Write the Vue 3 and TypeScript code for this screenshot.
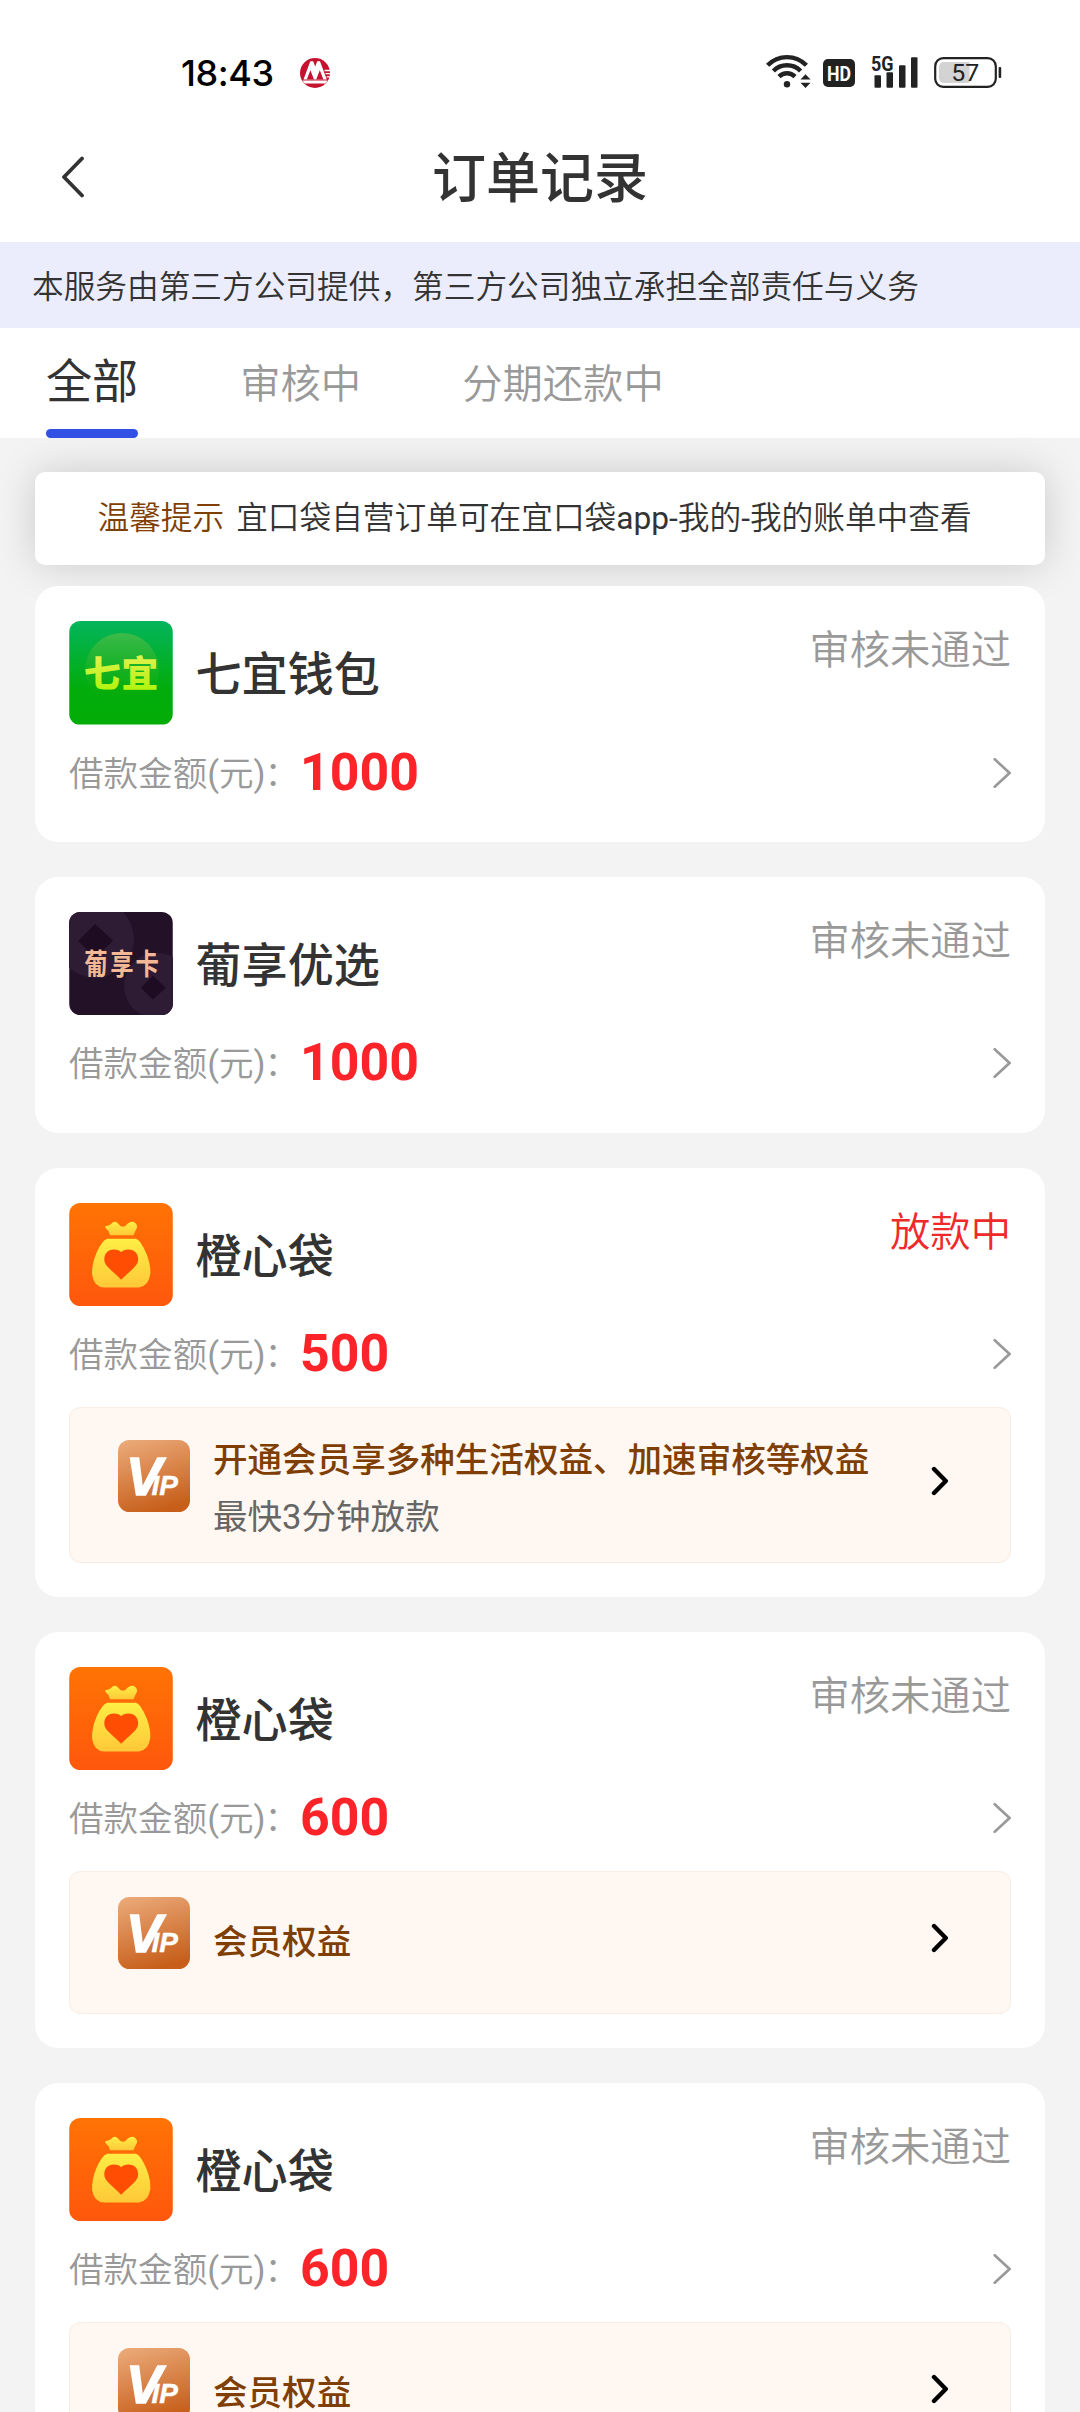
<script setup lang="ts">
type Logo = 'qiyi' | 'puxiang' | 'orange'

interface Benefit {
  title: string
  subtitle?: string
}

interface Order {
  id: number
  name: string
  logo: Logo
  status: string
  active?: boolean
  amount: number
  benefit?: Benefit
}

const tabs: string[] = ['全部', '审核中', '分期还款中']

const orders: Order[] = [
  { id: 1, name: '七宜钱包', logo: 'qiyi', status: '审核未通过', amount: 1000 },
  { id: 2, name: '葡享优选', logo: 'puxiang', status: '审核未通过', amount: 1000 },
  {
    id: 3,
    name: '橙心袋',
    logo: 'orange',
    status: '放款中',
    active: true,
    amount: 500,
    benefit: { title: '开通会员享多种生活权益、加速审核等权益', subtitle: '最快3分钟放款' },
  },
  { id: 4, name: '橙心袋', logo: 'orange', status: '审核未通过', amount: 600, benefit: { title: '会员权益' } },
  { id: 5, name: '橙心袋', logo: 'orange', status: '审核未通过', amount: 600, benefit: { title: '会员权益' } },
]
</script>

<template>
  <div class="page">
    <div class="statusbar">
      <span class="clock">18:43</span>
      <svg class="bank" width="30" height="30" viewBox="0 0 30 30">
        <circle cx="15" cy="15" r="15" fill="#c4122f" />
        <path d="M3.5 21.6 L10.3 3.3 H13.2 L15.2 8.4 L17.2 3.3 H20 L26.8 21.6 Z" fill="#fff" />
        <path d="M6.8 21.6 L10.4 12.2 L14 21.6 Z M16.2 21.6 L19.8 12.2 L23.4 21.6 Z" fill="#c4122f" />
        <path d="M24.5 12.5 H30 M25.5 15.7 H30 M26.6 18.9 H30" stroke="#fff" stroke-width="1.3" />
        <path d="M2.5 22.6 H27.5 L25.2 25.6 H4.8 Z" fill="#fff" />
      </svg>
      <div class="signals">
        <svg class="wifi" width="46" height="34" viewBox="0 0 46 34">
          <g fill="none" stroke="#222" stroke-width="4.4">
            <path d="M1.6 11.3 A27 27 0 0 1 40.4 11.3" />
            <path d="M7.4 17 A19 19 0 0 1 34.6 17" />
            <path d="M13 22.6 A11.4 11.4 0 0 1 29 22.6" />
          </g>
          <circle cx="21" cy="30.3" r="3.2" fill="#222" />
          <path d="M34.5 25.6 L39.5 20.3 L44.5 25.6 Z M34.5 28.8 L39.5 34 L44.5 28.8 Z" fill="#222" />
        </svg>
        <svg class="hd" width="32" height="28" viewBox="0 0 32 28">
          <rect width="32" height="28" rx="5" fill="#222" />
          <text x="4" y="21.6" textLength="24" lengthAdjust="spacingAndGlyphs" class="hd-text">HD</text>
        </svg>
        <svg class="cell" width="48" height="34" viewBox="0 0 48 34">
          <text x="1" y="16.5" textLength="22.5" lengthAdjust="spacingAndGlyphs" class="g-text">5G</text>
          <g fill="#222">
            <rect x="4.5" y="21.3" width="6.5" height="12.4" rx="1" />
            <rect x="16.5" y="18.3" width="6.5" height="15.4" rx="1" />
            <rect x="29" y="11.3" width="6.5" height="22.4" rx="1" />
            <rect x="41" y="3.3" width="6.5" height="30.4" rx="1" />
          </g>
        </svg>
        <svg class="battery" width="68" height="31" viewBox="0 0 68 31">
          <rect x="1.2" y="1.2" width="60.6" height="28.6" rx="8" fill="#fff" stroke="#222" stroke-width="2.2" />
          <path d="M10 5 H35.5 V26 H10 A5 5 0 0 1 5 21 V10 A5 5 0 0 1 10 5 Z" fill="#d3d3d3" />
          <rect x="64.6" y="10" width="2.6" height="11" rx="1" fill="#222" />
          <text x="17.3" y="24" textLength="28" lengthAdjust="spacingAndGlyphs" class="b-text">57</text>
        </svg>
      </div>
    </div>

    <header class="navbar">
      <svg class="back" width="24" height="42" viewBox="0 0 24 42">
        <path d="M22 2.5 L4 21 L22 39.5" fill="none" stroke="#333" stroke-width="3.8" stroke-linecap="round" stroke-linejoin="round" />
      </svg>
      <h1 class="title">订单记录</h1>
      <span class="nav-side"></span>
    </header>

    <div class="notice">本服务由第三方公司提供，第三方公司独立承担全部责任与义务</div>

    <nav class="tabs">
      <span v-for="(tab, i) in tabs" :key="tab" class="tab" :class="{ current: i === 0 }">{{ tab }}</span>
    </nav>

    <main class="body">
      <div class="tip">
        <span class="tip-label">温馨提示</span><span>宜口袋自营订单可在宜口袋<span class="latin">app-</span>我的<span class="latin">-</span>我的账单中查看</span>
      </div>

      <section v-for="order in orders" :key="order.id" class="card" :class="{ extended: order.benefit }">
        <div class="head">
          <svg class="logo" width="104" height="104" viewBox="0 0 104 104">
            <template v-if="order.logo === 'qiyi'">
              <defs>
                <linearGradient id="qy-bg" x1="0" y1="0" x2="0" y2="1">
                  <stop offset="0" stop-color="#04b55c" />
                  <stop offset="0.65" stop-color="#02ac0c" />
                  <stop offset="1" stop-color="#03ac05" />
                </linearGradient>
                <linearGradient id="qy-orb" x1="0" y1="0" x2="0" y2="1">
                  <stop offset="0" stop-color="#3dbb4a" />
                  <stop offset="0.75" stop-color="#0fae10" stop-opacity="0.5" />
                  <stop offset="1" stop-color="#03ac05" stop-opacity="0" />
                </linearGradient>
                <linearGradient id="qy-text" x1="0" y1="0" x2="0" y2="1">
                  <stop offset="0" stop-color="#f0f060" />
                  <stop offset="1" stop-color="#a6f500" />
                </linearGradient>
              </defs>
              <rect width="104" height="104" fill="url(#qy-bg)" />
              <circle cx="53" cy="49" r="37" fill="url(#qy-orb)" />
              <text x="14.5 52.5" y="66.5" class="qy-text" fill="url(#qy-text)">七宜</text>
            </template>
            <template v-else-if="order.logo === 'puxiang'">
              <rect width="104" height="104" fill="#231128" />
              <circle cx="26" cy="27" r="39" fill="#2e1c34" />
              <circle cx="88" cy="74" r="33" fill="#2e1c34" />
              <path d="M26 12 L44 29 L26 46 L9 29 Z" fill="#1d0c22" />
              <path d="M84 64 L97 76 L84 88 L72 76 Z" fill="#1d0c22" />
              <text transform="translate(15 63) scale(1 1.24)" x="0 26.2 51.5" y="0" class="px-text">葡享卡</text>
            </template>
            <template v-else>
              <defs>
                <linearGradient id="or-bg" x1="0" y1="0" x2="0" y2="1">
                  <stop offset="0" stop-color="#ff7304" />
                  <stop offset="1" stop-color="#ff570c" />
                </linearGradient>
                <linearGradient id="or-bag" x1="0" y1="0" x2="0" y2="1">
                  <stop offset="0" stop-color="#ffee45" />
                  <stop offset="1" stop-color="#ffc838" />
                </linearGradient>
              </defs>
              <rect width="104" height="104" fill="url(#or-bg)" />
              <path
                d="M41 32.5 L39.5 28.5 Q36 25 36 23.3 Q41 22.5 43 20 Q46.5 17.5 49.5 21 Q53 26 57 22.5 Q60.5 18 65 19 Q70.5 22 66.5 28 L64.5 32.5 Z"
                fill="url(#or-bag)"
              />
              <path
                d="M38 36 H67 Q72 37.5 78 52 Q82 63 81.5 71 Q80 83 70 85 H35 Q24.5 84 23 72 Q22.5 62 27 51 Q32.5 38 38 36 Z"
                fill="url(#or-bag)"
              />
              <path
                d="M52.2 49.5 C56 45 69.5 45 69.2 57 C69 63 63 66.5 52.2 77 C41.5 66.5 35.4 63 35.2 57 C35 45 48.5 45 52.2 49.5 Z"
                fill="#ff4d04"
              />
            </template>
          </svg>
          <span class="name">{{ order.name }}</span>
          <span class="status" :class="{ active: order.active }">{{ order.status }}</span>
        </div>

        <div class="row">
          <span class="label">借款金额<span class="latin">(</span>元<span class="latin">)</span><span class="colon">：</span></span>
          <span class="amount">{{ order.amount }}</span>
          <svg class="arrow" width="18" height="30" viewBox="0 0 18 30">
            <path d="M1.7 1.2 L16.5 15 L1.7 28.8" fill="none" stroke="#999" stroke-width="2.6" stroke-linecap="round" />
          </svg>
        </div>

        <div v-if="order.benefit" class="benefit" :class="{ single: !order.benefit.subtitle }">
          <svg class="vip" width="72" height="72" viewBox="0 0 72 72">
            <defs>
              <linearGradient id="vip-bg" x1="0.2" y1="0" x2="0.5" y2="1">
                <stop offset="0" stop-color="#eaa877" />
                <stop offset="1" stop-color="#c75f1b" />
              </linearGradient>
            </defs>
            <rect width="72" height="72" rx="11.5" fill="url(#vip-bg)" />
            <text x="8" y="55" class="vip-text">V<tspan class="vip-small" dx="-10.5">IP</tspan></text>
          </svg>
          <div class="benefit-text">
            <div class="benefit-title">{{ order.benefit.title }}</div>
            <div v-if="order.benefit.subtitle" class="benefit-sub">{{ order.benefit.subtitle }}</div>
          </div>
          <svg class="go" width="20" height="30" viewBox="0 0 20 30">
            <path d="M4 3 L15.8 15 L4 27" fill="none" stroke="#000" stroke-width="4.4" stroke-linecap="round" stroke-linejoin="round" />
          </svg>
        </div>
      </section>
    </main>
  </div>
</template>

<style>
body {
  margin: 0;
  overflow: hidden;
}
</style>

<style scoped>
.page {
  width: 1080px;
  height: 2412px;
  overflow: hidden;
  box-sizing: border-box;
  background: #f3f3f3;
  color: #333;
  font-family: Roboto, 'Noto Sans CJK SC', sans-serif;
  display: flex;
  flex-direction: column;
}
.page > * {
  flex-shrink: 0;
}
svg {
  display: block;
  flex-shrink: 0;
}
.latin {
  font-weight: 400;
}

.statusbar {
  height: 112px;
  background: #fff;
  display: flex;
  align-items: center;
  padding: 33px 78px 0 181px;
  box-sizing: border-box;
}
.clock {
  font-family: Inter, Roboto, sans-serif;
  font-size: 36px;
  line-height: 40px;
  width: 119px;
  color: #000;
  font-weight: 500;
  letter-spacing: -0.4px;
}
.signals {
  margin-left: auto;
  display: flex;
  align-items: center;
}
.hd {
  margin-left: 11px;
}
.cell {
  margin-left: 15px;
  margin-top: -3px;
  overflow: visible;
}
.wifi {
  margin-top: -3px;
}
.battery {
  margin-left: 16px;
}
.hd-text {
  font: 700 21px Roboto, sans-serif;
  fill: #fff;
}
.g-text {
  font: 700 21px Roboto, sans-serif;
  fill: #222;
}
.b-text {
  font: 400 24px Roboto, sans-serif;
  fill: #222;
}

.navbar {
  height: 130px;
  background: #fff;
  display: flex;
  align-items: center;
  padding: 0 60px;
}
.title {
  flex: 1;
  margin: 0;
  padding-top: 6px;
  text-align: center;
  font-size: 54px;
  line-height: 64px;
  font-weight: 500;
}
.nav-side {
  width: 24px;
}

.notice {
  height: 86px;
  line-height: 91px;
  padding-left: 32px;
  background: #ebedfc;
  font-size: 31.68px;
  font-weight: 350;
  white-space: nowrap;
}

.tabs {
  height: 110px;
  background: #fff;
  display: flex;
  padding-left: 46px;
}
.tab {
  font-size: 40.32px;
  line-height: 113px;
  color: #999;
  margin-right: 101px;
  font-weight: 350;
}
.tab.current {
  font-size: 46.08px;
  line-height: 109px;
  color: #333;
  font-weight: 400;
  margin-right: 102px;
  height: 110px;
  position: relative;
}
.tab.current::after {
  content: '';
  position: absolute;
  left: 0;
  right: 0;
  bottom: 0;
  height: 9px;
  border-radius: 4.5px;
  background: #3350e5;
}

.body {
  padding: 34px 35px 0;
  display: flex;
  flex-direction: column;
}
.tip {
  height: 93px;
  line-height: 93px;
  padding-left: 62.5px;
  border-radius: 10px;
  background: #fff;
  box-shadow: 0 0 40px rgba(0, 0, 0, 0.17);
  font-size: 31.68px;
  font-weight: 350;
  white-space: nowrap;
  margin-bottom: 21px;
}
.tip-label {
  color: #7f3f04;
  margin-right: 12px;
}

.card {
  position: relative;
  height: 256.32px;
  box-sizing: border-box;
  background: #fff;
  border-radius: 23px;
  margin-bottom: 34.56px;
  padding: 35px 34px 0;
  flex-shrink: 0;
}
.card.extended {
  height: auto;
  padding-bottom: 34.5px;
}
.head {
  display: flex;
  height: 103px;
}
.logo {
  border-radius: 11.5px;
  height: 103.5px;
}
.name {
  margin-left: 22.5px;
  font-size: 46.08px;
  line-height: 108px;
  font-weight: 500;
}
.status {
  margin-left: auto;
  font-size: 40.32px;
  line-height: 59px;
  color: #999;
  font-weight: 350;
}
.status.active {
  color: #ee2a2a;
}
.row {
  display: flex;
  align-items: center;
  height: 94px;
}
.label {
  font-size: 34.56px;
  line-height: 50px;
  color: #999;
  width: 231px;
  white-space: nowrap;
  padding-top: 5px;
  font-weight: 350;
}
.colon {
  margin-left: -1px;
}
.amount {
  font-size: 51.84px;
  line-height: 60px;
  padding-top: 3px;
  font-weight: 700;
  color: #fc2329;
}
.arrow {
  margin-left: auto;
  margin-top: 3px;
}

.benefit {
  height: 156px;
  margin-top: 7px;
  box-sizing: border-box;
  border: 1.5px solid #f9ece2;
  border-radius: 11.5px;
  background: #fff7f1;
  display: flex;
  padding: 32px 60px 0 48px;
}
.benefit.single {
  height: 143px;
  padding-top: 25px;
}
.benefit-text {
  margin-left: 23px;
  font-weight: 500;
  font-size: 34.56px;
  white-space: nowrap;
}
.benefit-title {
  line-height: 40px;
  color: #7f3f04;
}
.benefit-sub {
  margin-top: 17px;
  line-height: 40px;
  color: #666;
  font-weight: 400;
}
.single .benefit-title {
  margin-top: 25px;
}
.go {
  margin-left: auto;
  margin-top: 26px;
}

.qy-text {
  font: 900 37px 'Noto Sans CJK SC', sans-serif;
}
.px-text {
  font: 700 23.5px 'Noto Sans CJK SC', sans-serif;
  fill: #f3b896;
}
.vip-text {
  font: italic 700 54px 'Liberation Sans', sans-serif;
  fill: #fff;
  stroke: #fff;
  stroke-width: 1.4px;
}
.vip-small {
  font-size: 28px;
  stroke-width: 0.4px;
}
</style>
